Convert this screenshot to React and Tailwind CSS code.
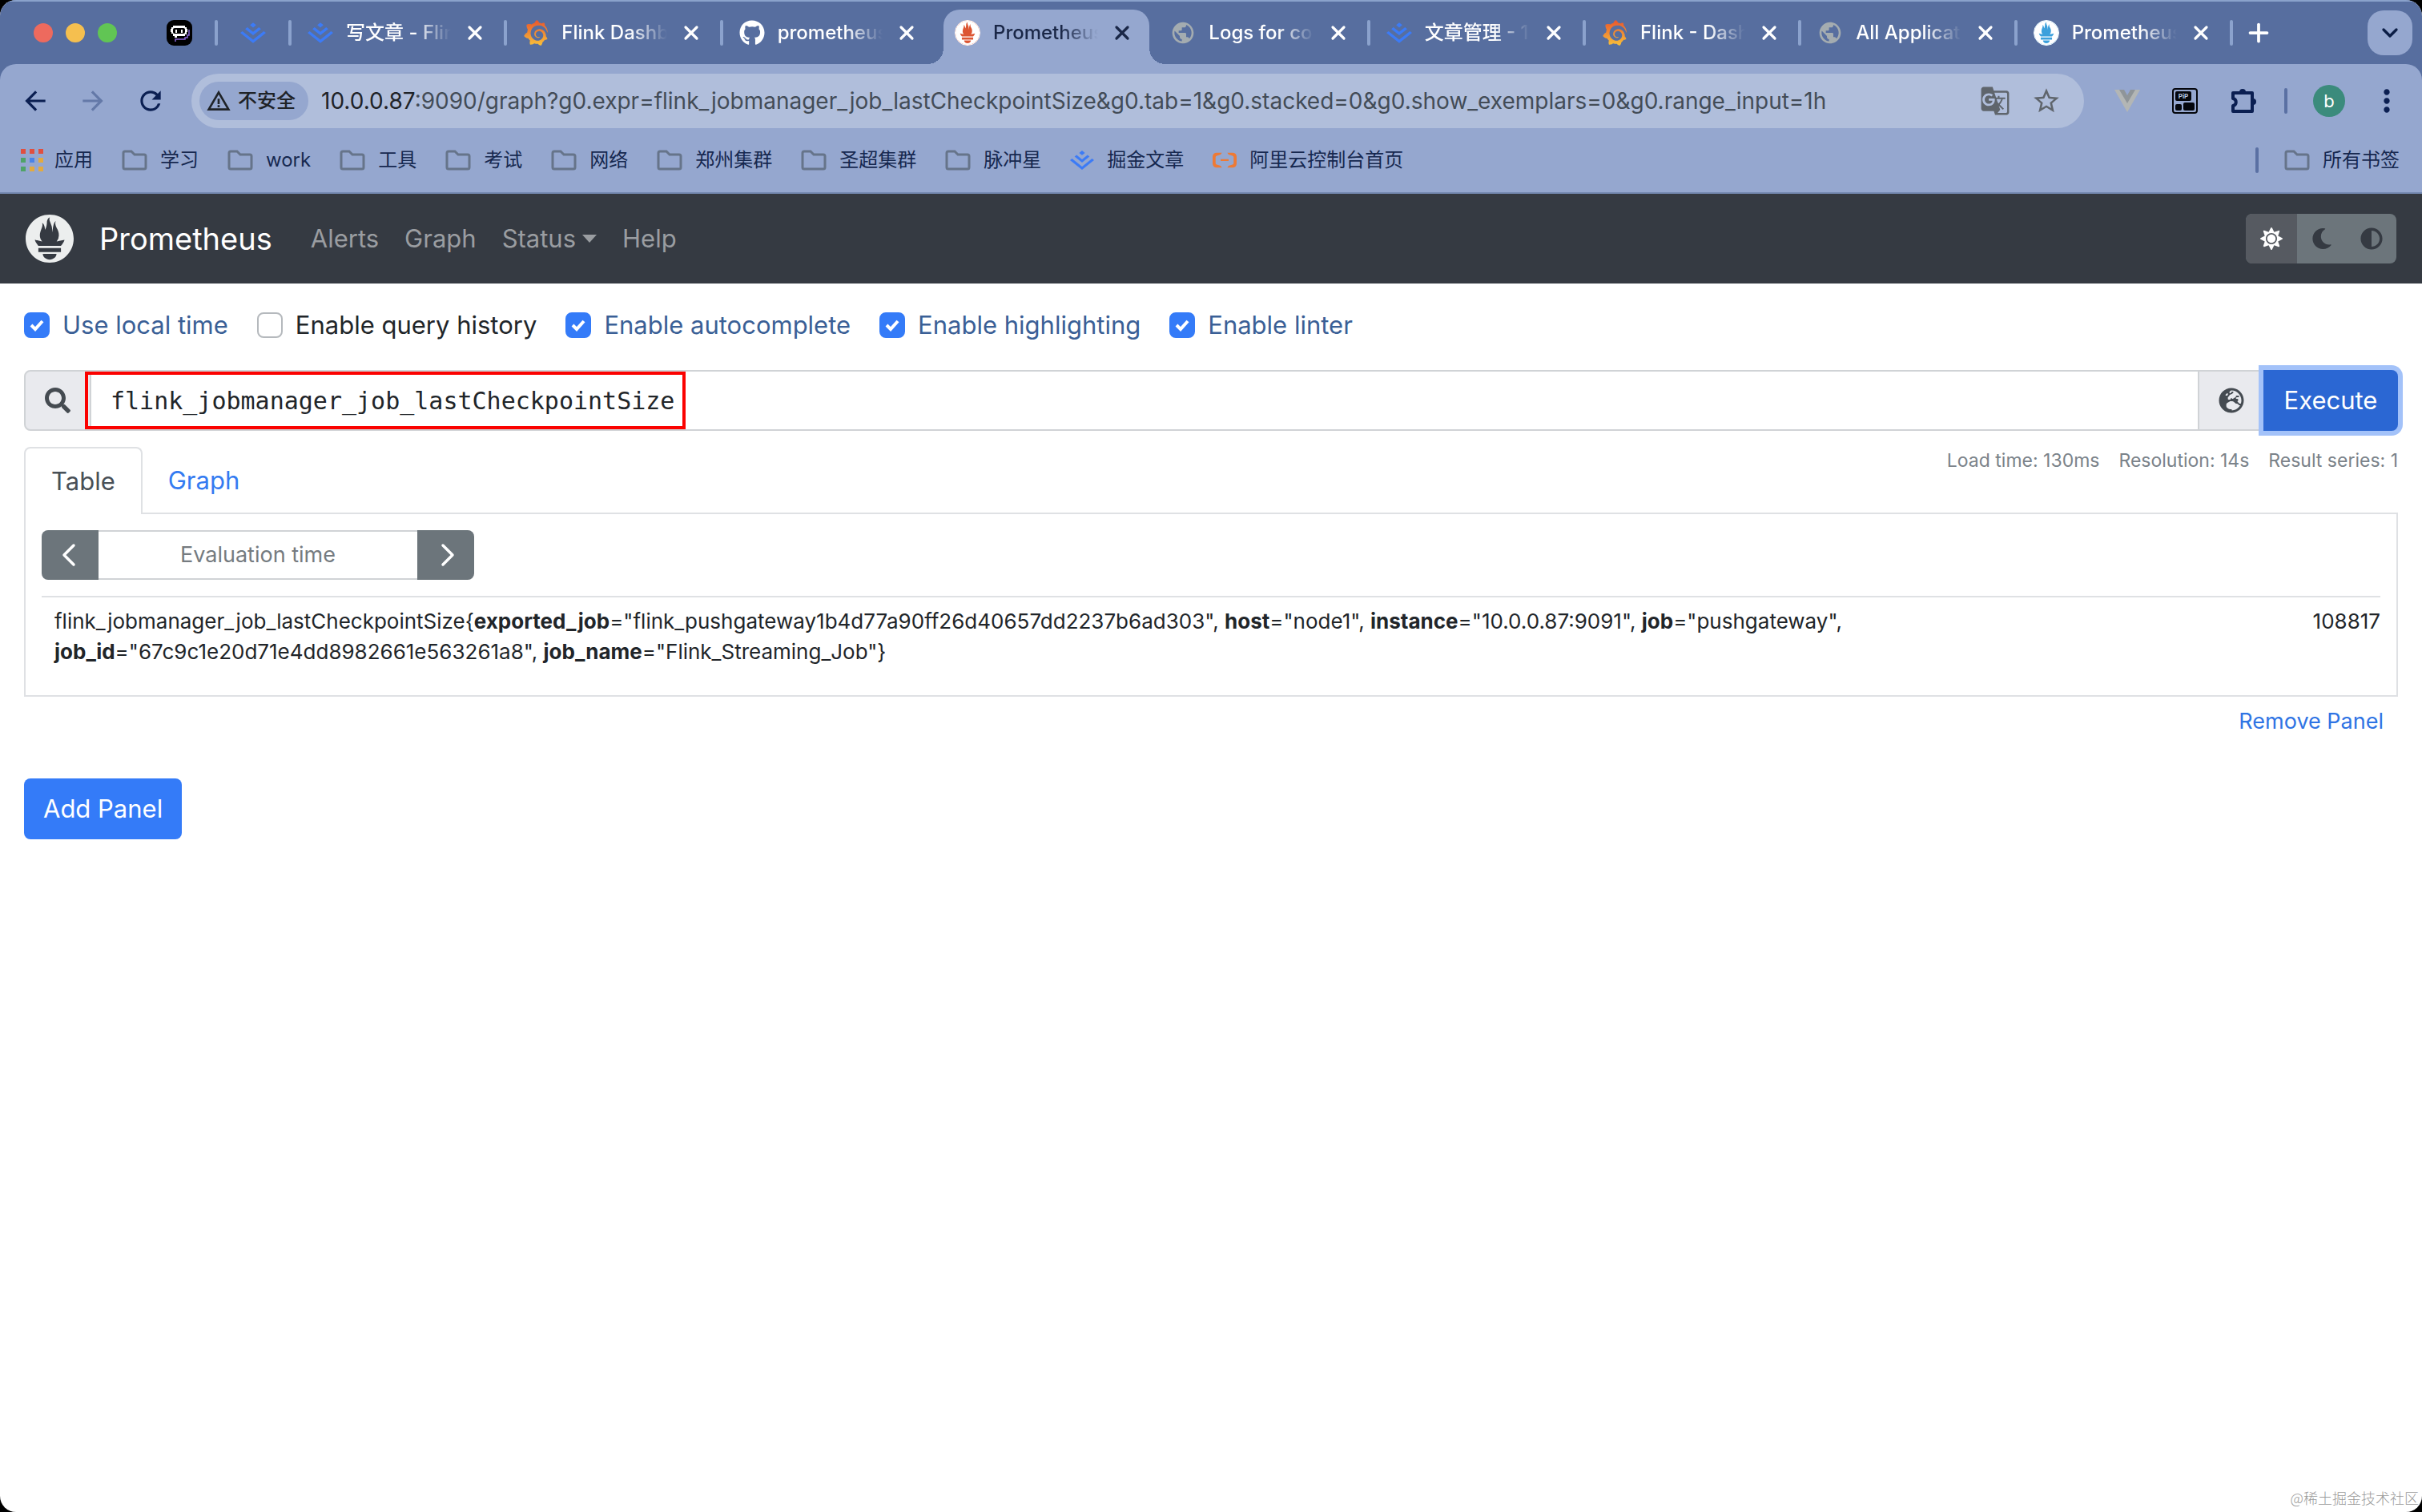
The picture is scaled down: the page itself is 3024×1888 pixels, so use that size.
import { useState } from "react";
import { ChevronDown, ChevronLeft, ChevronRight, Plus, X } from "lucide-react";
import { FaAdjust, FaGithub, FaGlobeEurope, FaMoon, FaSearch, FaSun } from "react-icons/fa";
import {
  MdArrowBack,
  MdArrowForward,
  MdGTranslate,
  MdMoreVert,
  MdPublic,
  MdRefresh,
  MdStarBorder,
  MdWarningAmber,
} from "react-icons/md";
import { SiAlibabacloud, SiGrafana, SiJuejin, SiPrometheus } from "react-icons/si";

/* ===== DATA ===== */
const TABS = [
  { title: "写文章 - Flin", icon: "juejin" },
  { title: "Flink Dashb", icon: "grafana" },
  { title: "prometheus", icon: "github" },
  { title: "Prometheus", icon: "prometheus", active: true },
  { title: "Logs for con", icon: "globe" },
  { title: "文章管理 - 1", icon: "juejin" },
  { title: "Flink - Dash", icon: "grafana" },
  { title: "All Applicati", icon: "globe" },
  { title: "Prometheus", icon: "prometheusBlue" },
];

const BOOKMARKS = [
  { label: "学习" },
  { label: "work" },
  { label: "工具" },
  { label: "考试" },
  { label: "网络" },
  { label: "郑州集群" },
  { label: "圣超集群" },
  { label: "脉冲星" },
];

const OPTIONS = [
  { id: "local-time", label: "Use local time", checked: true },
  { id: "history", label: "Enable query history", checked: false },
  { id: "autocomplete", label: "Enable autocomplete", checked: true },
  { id: "highlighting", label: "Enable highlighting", checked: true },
  { id: "linter", label: "Enable linter", checked: true },
];

const METRIC = "flink_jobmanager_job_lastCheckpointSize";

const LABELS = [
  ["exported_job", "flink_pushgateway1b4d77a90ff26d40657dd2237b6ad303"],
  ["host", "node1"],
  ["instance", "10.0.0.87:9091"],
  ["job", "pushgateway"],
  ["job_id", "67c9c1e20d71e4dd8982661e563261a8"],
  ["job_name", "Flink_Streaming_Job"],
];

const APP_DOTS = [
  "#e04f3f", "#e04f3f", "#e04f3f",
  "#4fa367", "#4a83e8", "#e3aa3f",
  "#4fa367", "#e3aa3f", "#e3aa3f",
];

export default function App() {
  return (
    <div className="min-h-screen bg-black font-[Inter,'Noto_Sans_CJK_SC',sans-serif]">
      <div className="relative flex min-h-screen flex-col overflow-hidden rounded-[20px] bg-white">
        <header className="border-b-2 border-[#7488b0] bg-[#576e9f]">
          <TabStrip />
          <div className="rounded-t-[20px] bg-[#95a7cf]">
            <Toolbar />
            <BookmarksBar />
          </div>
        </header>
        <Navbar />
        <QueryPage />
        <p className="absolute right-1 bottom-2 font-['Noto_Sans_CJK_SC',sans-serif] text-[18px] leading-5 font-light text-[#9a9a9a]">
          @稀土掘金技术社区
        </p>
      </div>
    </div>
  );
}

/* ===== BROWSER TABS ===== */
const TabStrip = () => (
  <div className="flex h-20 items-center border-t-2 border-[#8aa2cb] pl-[42px]">
    <div className="flex gap-4">
      <button aria-label="Close window" className="size-6 rounded-full bg-[#ed6a5e]" />
      <button aria-label="Minimize window" className="size-6 rounded-full bg-[#f5bf4f]" />
      <button aria-label="Zoom window" className="size-6 rounded-full bg-[#61c554]" />
    </div>
    <a href="#chat" aria-label="Chat" className="ml-[62px]">
      <RobotIcon />
    </a>
    <TabDivider className="ml-7" />
    <a href="#juejin" aria-label="Juejin" className="ml-7">
      <SiJuejin size={32} color="#3c7bf6" />
    </a>
    <TabDivider className="ml-7" />
    <div className="flex min-w-0 flex-1 self-stretch">
      {TABS.map((tab, i) => (
        <BrowserTab key={i} tab={tab} divider={!tab.active && !TABS[i + 1]?.active} />
      ))}
    </div>
    <button aria-label="New tab" className="ml-[14px] text-white">
      <Plus size={36} strokeWidth={2.5} />
    </button>
    <button
      aria-label="Search tabs"
      className="mr-3 ml-[118px] flex size-14 items-center justify-center rounded-[20px] bg-[#95a7cf] text-[#0b1d45]"
    >
      <ChevronDown size={32} strokeWidth={2.5} />
    </button>
    <svg width="0" height="0" className="absolute">
      <defs>
        <linearGradient id="grafana" x1="0" y1="0" x2="0" y2="1">
          <stop offset="0" stopColor="#e8552d" />
          <stop offset="1" stopColor="#f8c13a" />
        </linearGradient>
      </defs>
    </svg>
  </div>
);

const TabDivider = ({ className }) => (
  <span className={`h-8 w-1 shrink-0 rounded-full bg-[#8ba2cd] ${className}`} />
);

const BrowserTab = ({ tab, divider }) => (
  <div
    className={`relative flex min-w-0 flex-1 items-center pl-5 ${tab.active ? "text-[#1a2747]" : "text-white"}`}
  >
    {tab.active && (
      <span className="absolute inset-x-[6px] top-[10px] bottom-0 rounded-t-[20px] bg-[#95a7cf] before:absolute before:bottom-0 before:-left-5 before:size-5 before:bg-[radial-gradient(circle_at_0_0,transparent_20px,#95a7cf_20px)] after:absolute after:-right-5 after:bottom-0 after:size-5 after:bg-[radial-gradient(circle_at_100%_0,transparent_20px,#95a7cf_20px)]" />
    )}
    <span className="relative shrink-0">
      <Favicon name={tab.icon} />
    </span>
    <a
      href="#tab"
      className="relative ml-4 min-w-0 flex-1 overflow-hidden text-[24px] leading-8 font-medium whitespace-nowrap [mask-image:linear-gradient(to_right,black_65%,transparent)]"
    >
      {tab.title}
    </a>
    <button aria-label="Close tab" className="relative mr-[22px] ml-4 shrink-0">
      <X size={28} strokeWidth={2.75} />
    </button>
    <TabDivider className={divider ? "" : "invisible"} />
  </div>
);

const Favicon = ({ name }) => {
  if (name === "juejin") return <SiJuejin size={32} color="#3c7bf6" />;
  if (name === "grafana") return <SiGrafana size={32} fill="url(#grafana)" />;
  if (name === "github") return <FaGithub size={32} />;
  if (name === "globe") return <MdPublic size={32} color="#a4acb0" />;
  return (
    <span
      className={`block rounded-full border border-white ${name === "prometheus" ? "bg-[#dc5533]" : "bg-[#3ba0dc]"}`}
    >
      <SiPrometheus size={30} color="white" />
    </span>
  );
};

/* ===== ADDRESS BAR ===== */
const Toolbar = () => (
  <div className="flex items-center pt-3 pr-[22px] pl-[25px] text-[#0b1f52]">
    <button aria-label="Back">
      <MdArrowBack size={38} />
    </button>
    <button aria-label="Forward" className="ml-[34px] text-[#6479a8]">
      <MdArrowForward size={38} />
    </button>
    <button aria-label="Reload" className="ml-[34px]">
      <MdRefresh size={38} />
    </button>
    <div className="ml-8 flex h-[68px] min-w-0 flex-1 items-center rounded-full bg-[#b0bedb] pr-7 pl-[10px]">
      <button className="flex h-12 shrink-0 items-center gap-2 rounded-full bg-[#95a7cf] pr-4 pl-2 text-[24px] font-medium text-[#1f2328]">
        <MdWarningAmber size={32} />
        不安全
      </button>
      <a
        href="#address"
        className="ml-4 min-w-0 flex-1 overflow-hidden text-[28px] whitespace-nowrap text-[#434c57]"
      >
        <span className="text-[#1f2328]">10.0.0.87</span>
        :9090/graph?g0.expr={METRIC}&amp;g0.tab=1&amp;g0.stacked=0&amp;g0.show_exemplars=0&amp;g0.range_input=1h
      </a>
      <button aria-label="Translate this page" className="text-[#5f656c]">
        <MdGTranslate size={38} />
      </button>
      <button aria-label="Bookmark this tab" className="ml-[26px] text-[#5f656c]">
        <MdStarBorder size={38} />
      </button>
    </div>
    <button aria-label="Vue devtools" className="ml-[38px]">
      <VueIcon />
    </button>
    <button aria-label="Picture in picture" className="ml-10">
      <PipIcon />
    </button>
    <button aria-label="Extensions" className="ml-10">
      <PuzzleIcon />
    </button>
    <span className="ml-[34px] h-8 w-1 rounded-full bg-[#5a70a3]" />
    <button
      aria-label="Profile"
      className="ml-8 size-10 rounded-full bg-[#3b8b7c] text-[22px] leading-none text-white"
    >
      b
    </button>
    <button aria-label="Menu" className="ml-[30px]">
      <MdMoreVert size={44} />
    </button>
  </div>
);

/* ===== BOOKMARKS ===== */
const BookmarksBar = () => (
  <nav className="flex h-20 items-center gap-9 pr-7 pl-[26px] text-[24px] text-[#16284f]">
    <a href="#apps" className="flex items-center gap-[14px]">
      <svg width="28" height="28" viewBox="0 0 28 28">
        {APP_DOTS.map((color, i) => (
          <rect key={i} x={(i % 3) * 11} y={Math.floor(i / 3) * 11} width="6" height="6" fill={color} />
        ))}
      </svg>
      应用
    </a>
    {BOOKMARKS.map((item) => (
      <Bookmark key={item.label} label={item.label}>
        <FolderIcon />
      </Bookmark>
    ))}
    <Bookmark label="掘金文章">
      <SiJuejin size={30} color="#3c7bf6" />
    </Bookmark>
    <Bookmark label="阿里云控制台首页">
      <SiAlibabacloud size={30} color="#ee7a35" />
    </Bookmark>
    <div className="ml-auto flex items-center gap-8">
      <span className="h-8 w-1 rounded-full bg-[#5a70a3]" />
      <Bookmark label="所有书签">
        <FolderIcon />
      </Bookmark>
    </div>
  </nav>
);

const Bookmark = ({ label, children }) => (
  <a href="#bookmark" className="flex shrink-0 items-center gap-4">
    {children}
    {label}
  </a>
);

/* ===== PROMETHEUS NAVBAR ===== */
const Navbar = () => (
  <nav className="flex h-28 items-center bg-[#353a42] pr-8 pl-8 text-[31px] text-[#9a9da1]">
    <a href="#home" className="flex items-center gap-8 text-[38px] text-white">
      <SiPrometheus size={60} color="#eceeee" />
      Prometheus
    </a>
    <div className="ml-12 flex items-center gap-8">
      <a href="#alerts">Alerts</a>
      <a href="#graph">Graph</a>
      <button className="flex items-center gap-2">
        Status
        <svg width="18" height="10" viewBox="0 0 18 10" fill="currentColor">
          <path d="M0 0h18l-9 10z" />
        </svg>
      </button>
      <a href="#help">Help</a>
    </div>
    <div className="ml-auto flex h-[62px] overflow-hidden rounded-lg bg-[#6c757b] text-[#353a42]">
      <button aria-label="Light theme" className="flex w-16 items-center justify-center bg-[#565a61] text-white">
        <FaSun size={28} />
      </button>
      <button aria-label="Dark theme" className="flex w-[62px] items-center justify-center">
        <FaMoon size={26} />
      </button>
      <button aria-label="Browser theme" className="flex w-[62px] items-center justify-center">
        <FaAdjust size={28} />
      </button>
    </div>
  </nav>
);

/* ===== PAGE ===== */
const QueryPage = () => {
  const [query, setQuery] = useState(METRIC);

  return (
    <main className="px-[30px] pt-7 pb-16">
      <div className="flex gap-9">
        {OPTIONS.map((option) => (
          <Option key={option.id} option={option} />
        ))}
      </div>

      <div className="relative mt-8 flex h-[76px] text-[#454b51]">
        <span className="flex w-[84px] items-center justify-center rounded-l-lg border-2 border-[#d0d3d6] bg-[#e9eaee]">
          <FaSearch size={32} />
        </span>
        <input
          type="text"
          aria-label="Expression"
          value={query}
          onChange={(e) => setQuery(e.target.value)}
          spellCheck={false}
          className="min-w-0 flex-1 border-y-2 border-[#d0d3d6] bg-white pl-6 font-['DejaVu_Sans_Mono',monospace] text-[30px] text-[#212529] outline-none"
        />
        <button
          aria-label="Open metrics explorer"
          className="flex w-[82px] items-center justify-center border-2 border-r-0 border-[#d0d3d6] bg-[#e9eaee]"
        >
          <FaGlobeEurope size={32} />
        </button>
        <button className="w-[168px] rounded-r-lg bg-[#2b67d3] text-[31px] text-white shadow-[0_0_0_6px_#a3c2f9]">
          Execute
        </button>
        {/* highlight frame around the expression */}
        <span className="pointer-events-none absolute inset-y-[2px] left-[76px] w-[750px] border-4 border-[#fb0200]" />
      </div>

      <div className="mt-5 flex items-start justify-between border-b-2 border-[#dfe1e4]">
        <div className="-mb-[2px] flex text-[31px] leading-[48px]">
          <button className="h-[84px] rounded-t-lg border-2 border-b-0 border-[#dfe1e4] bg-white px-8 text-[#495057]">
            Table
          </button>
          <button className="h-[84px] px-8 text-[#347bf1]">Graph</button>
        </div>
        <div className="flex gap-6 text-[23px] leading-[34px] text-[#7b838a]">
          <span>Load time: 130ms</span>
          <span>Resolution: 14s</span>
          <span>Result series: 1</span>
        </div>
      </div>

      <div className="border-2 border-t-0 border-[#dfe1e4] px-5 pt-5 pb-6">
        <EvaluationTime />
        <table className="mt-5 w-full border-t-2 border-[#dfe1e4] text-[26px] leading-[38px] text-[#212529]">
          <tbody>
            <tr className="align-top">
              <td className="w-4/5 py-[11px] pl-4">
                {METRIC}
                {"{"}
                {LABELS.map(([name, value], i) => (
                  <span key={name}>
                    <strong>{name}</strong>="{value}"{i < LABELS.length - 1 && ", "}
                  </span>
                ))}
                {"}"}
              </td>
              <td className="py-[11px] text-right">108817</td>
            </tr>
          </tbody>
        </table>
      </div>

      <div className="flex justify-end pt-2 pr-[18px]">
        <button className="text-[27px] leading-[46px] text-[#2f74e4]">Remove Panel</button>
      </div>
      <button className="mt-12 h-[76px] rounded-lg bg-[#347bf8] px-6 text-[31px] text-white">
        Add Panel
      </button>
    </main>
  );
};

const Option = ({ option }) => {
  const [checked, setChecked] = useState(option.checked);

  return (
    <div className="flex items-center gap-4">
      <span className="grid">
        <input
          id={option.id}
          type="checkbox"
          checked={checked}
          onChange={() => setChecked(!checked)}
          className="col-start-1 row-start-1 size-8 appearance-none rounded-lg border-2 border-[#b5b9bd] bg-white checked:border-[#347bf8] checked:bg-[#347bf8]"
        />
        {checked && (
          <svg
            viewBox="0 0 32 32"
            className="pointer-events-none col-start-1 row-start-1 size-8 fill-none stroke-white stroke-4"
          >
            <path d="M9 16l5 5 9-10" />
          </svg>
        )}
      </span>
      <label
        htmlFor={option.id}
        className={`text-[31px] leading-[48px] ${checked ? "text-[#3a5f96]" : "text-[#212529]"}`}
      >
        {option.label}
      </label>
    </div>
  );
};

const EvaluationTime = () => (
  <div className="flex h-[62px] w-[540px] overflow-hidden rounded-lg text-white">
    <button aria-label="Earlier" className="flex w-[71px] items-center justify-center bg-[#6c757b] pr-1">
      <ChevronLeft size={48} strokeWidth={1.75} />
    </button>
    <input
      type="text"
      aria-label="Evaluation time"
      placeholder="Evaluation time"
      className="min-w-0 flex-1 border-y-2 border-[#d0d3d6] bg-white text-center text-[27px] text-[#495057] outline-none placeholder:text-[#757b80]"
    />
    <button aria-label="Later" className="flex w-[71px] items-center justify-center bg-[#6c757b] pl-1">
      <ChevronRight size={48} strokeWidth={1.75} />
    </button>
  </div>
);

/* ===== ICONS ===== */
const FolderIcon = () => (
  <svg width="32" height="26" viewBox="0 0 32 26" fill="none" stroke="#66748a" strokeWidth="3">
    <path d="M2 4a2 2 0 0 1 2-2h8l4 4h12a2 2 0 0 1 2 2v14a2 2 0 0 1-2 2H4a2 2 0 0 1-2-2z" />
  </svg>
);

const RobotIcon = () => (
  <svg width="32" height="32" viewBox="0 0 32 32">
    <rect width="32" height="32" rx="9" fill="#000" />
    <path d="M11 27v-3h12v-2h3v-3h2v-7" fill="none" stroke="#8a63d8" strokeWidth="1.5" />
    <path d="M8 7h15v2h2v2h1v4h-1v3h-2v2H13v2h-3v-2H8v-3H6v-2H5v-4h1V9h2z" fill="#fff" />
    <rect x="8" y="10" width="15" height="7" rx="2" fill="#000" />
    <path d="M11 12h2v4h-2zM18 12h2v4h-2z" fill="#fff" />
  </svg>
);

const VueIcon = () => (
  <svg width="32" height="28" viewBox="0 0 32 28">
    <path d="M0 0h32L16 28z" fill="#b3b6b5" />
    <path d="M6 0h20L16 17z" fill="#8f9599" />
    <path d="M12 0h8l-4 7z" fill="#95a7cf" />
  </svg>
);

const PipIcon = () => (
  <svg width="32" height="32" viewBox="0 0 32 32">
    <rect x="1" y="1" width="30" height="30" rx="3" fill="none" stroke="#05070d" strokeWidth="2" />
    <rect x="4" y="4" width="20" height="12" rx="2" fill="#05070d" />
    <rect x="4" y="20" width="8" height="8" rx="2" fill="#05070d" />
    <rect x="14" y="18" width="14" height="10" rx="2" fill="#05070d" />
    <text x="14" y="13" fontSize="8" fontWeight="700" textAnchor="middle" fill="#b9c6e2">
      PiP
    </text>
  </svg>
);

const PuzzleIcon = () => (
  <svg width="34" height="34" viewBox="0 0 34 34">
    <path
      d="M4 7h24v23H4v-7c5-1 5-8 0-9z"
      fill="none"
      stroke="#0b1f52"
      strokeWidth="4"
      strokeLinejoin="round"
    />
    <path d="M12 6a4 4 0 0 1 8 0zM29 14a4 4 0 0 1 0 8z" fill="#0b1f52" />
  </svg>
);
